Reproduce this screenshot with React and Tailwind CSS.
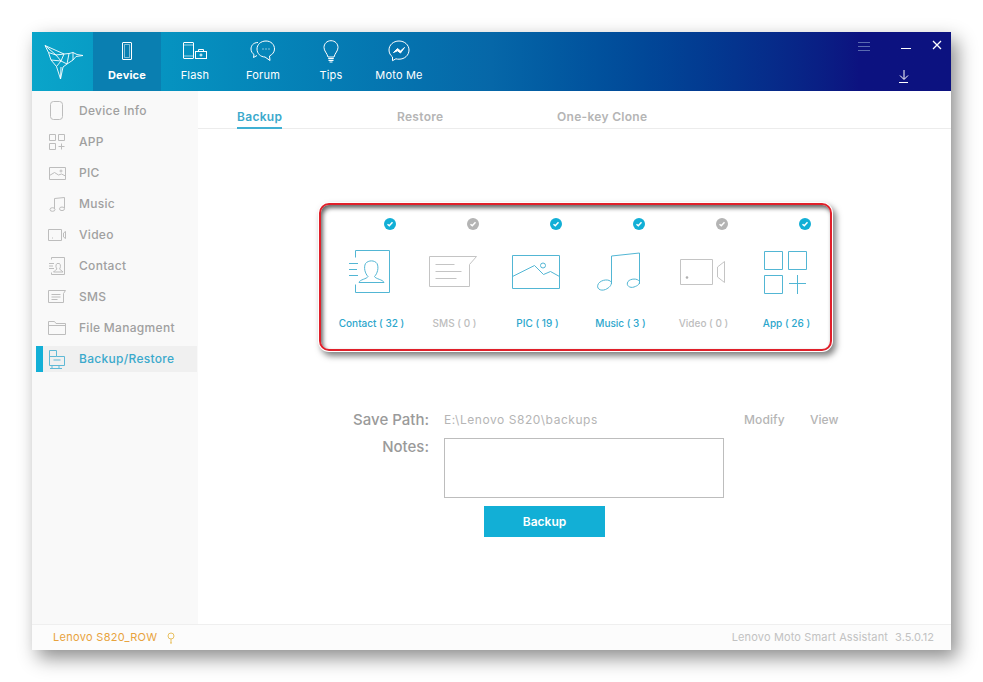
import React from 'react';

const font = { fontFamily: 'Inter, "Noto Sans", sans-serif' };

function Svg({ w, h, children, className = '', stroke = 'currentColor', sw = 1 }) {
  return (
    <svg width={w} height={h} viewBox={`0 0 ${w} ${h}`} fill="none" stroke={stroke} strokeWidth={sw} className={`block shrink-0 ${className}`}>
      {children}
    </svg>
  );
}

const Logo = () => (
  <svg width="44" height="40" viewBox="40 40 44 40" fill="none" stroke="#fff" strokeWidth="0.9" strokeLinejoin="round" className="block">
    <path d="M44 43.500 L63 52 L68 51.500 L72 50.500 L76 52.500 L82 53.500 L75 54.500 L72 58 L66 62 L62 65 L59.500 77 L55.500 64.500 L50 58 L47.500 50.500 Z" />
    <path d="M44 43.500 L55 53 L47.500 50.500 M55 53 L63 52 L60 59 L50 58 M60 59 L55.500 64.500 M60 59 L66 62 L68 51.500 M59.500 77 L60 65 M55 53 L60 59 M72 50.500 L72 58" />
  </svg>
);

const Phone = () => (
  <Svg w={12} h={19}><rect x="1.500" y="0.500" width="9" height="17" rx="0.500" /><path d="M3.500 2.500h5v13h-5z" strokeOpacity="0.5" /></Svg>
);
const Flash = () => (
  <Svg w={25} h={18}>
    <rect x="0.500" y="0.500" width="10" height="16" rx="0.500" /><path d="M0.500 14h10M0.500 3h10" strokeOpacity="0.6" />
    <rect x="12.500" y="9.500" width="11" height="7" /><path d="M15.500 9.500v-2h5v2M18 11.500v3M16.500 13h3" />
  </Svg>
);
const Forum = () => (
  <Svg w={26} h={22}>
    <path d="M8 2.500 C3 2.500 1 6 1 9 c0 2.500 1.500 4.500 3 5.500 l-.5 3 3.500-2" />
    <path d="M16 1 C10.500 1 7 4.800 7 9 c0 4.500 3.500 8 8 8 l5 3.500 -.5-4.500 c3-1.500 5-4 5-7 C24.500 4.500 21 1 16 1 Z" />
    <path d="M12.500 9h1M15.500 9h1M18.500 9h1" />
  </Svg>
);
const Bulb = () => (
  <Svg w={16} h={23}>
    <path d="M8 .7 C3.800 .7 1 3.800 1 7.500 c0 3.500 3 5.500 4 9.500 h6 c1-4 4-6 4-9.500 C15 3.800 12.200 .7 8 .7 Z" />
    <path d="M5.200 18.500h5.600M5.500 20.300h5M6.500 22h3" strokeWidth="1.200" />
  </Svg>
);
const Moto = () => (
  <Svg w={22} h={22}>
    <path d="M11 1 C5.300 1 1 5 1 10 c0 3 1.400 5.300 3.500 7 v3.700 l3.400-1.900 c1 .3 2 .4 3.100 .4 5.700 0 10-4 10-9.200 C21 5 16.700 1 11 1 Z" />
    <path d="M5.500 12.500 L9.500 8.500 L12.500 11 L16.500 7.500 L12.500 13 L9.500 10.800 Z" fill="currentColor" />
  </Svg>
);

const navItems = [
  { label: 'Device', icon: <Phone />, active: true },
  { label: 'Flash', icon: <Flash /> },
  { label: 'Forum', icon: <Forum /> },
  { label: 'Tips', icon: <Bulb /> },
  { label: 'Moto Me', icon: <Moto /> },
];

const SideBox = ({ children, w = 20, h = 20 }) => (
  <Svg w={w} h={h} stroke="#bdbdbd">{children}</Svg>
);

const sideItems = [
  { label: 'Device Info', icon: <SideBox h={20}><rect x="3.500" y="0.500" width="12" height="18" rx="3" /></SideBox> },
  { label: 'APP', icon: <SideBox><path d="M2.500 2.500h6v6h-6zM11.500 2.500h6v6h-6zM2.500 11.500h6v6h-6zM11.500 14.500h6M14.500 11.500v6" /></SideBox> },
  { label: 'PIC', icon: <SideBox><path d="M2.500 4.500h16v12h-16zM2.500 12.500l5-3 4 2.500 3-1 4 2" /><circle cx="14" cy="8" r="1" /></SideBox> },
  { label: 'Music', icon: <SideBox><path d="M7.500 15V4.500l10-1V14" /><ellipse cx="5.500" cy="15.500" rx="2.500" ry="1.800" /><ellipse cx="15" cy="14.800" rx="2.500" ry="1.800" /></SideBox> },
  { label: 'Video', icon: <SideBox><path d="M1.500 4.500h13v11h-13zM16.500 8l2-1.500v7l-2-1.500z" /><path d="M5 13h1" /></SideBox> },
  { label: 'Contact', icon: <SideBox><path d="M4.500 3.500v-2h13v17h-13v-2M2 7.500h5M2 10h4M2 12.500h5M6.500 16c1-1.500 3-2 3.500-3-1-1-1.800-4 0-5.500h2.500c1.500 1.500 1 4.500 0 5.500 .5 1 2.500 1.500 3.500 3z" /></SideBox> },
  { label: 'SMS', icon: <SideBox><path d="M1.500 3.500h17l-2 3v9h-15zM4.500 7.500h9M4.500 10h9M4.500 12.500h6" /></SideBox> },
  { label: 'File Managment', icon: <SideBox><path d="M1.500 16.500v-13h6l1.500 2h9.500v11zM1.500 7.500h17" /></SideBox> },
  { label: 'Backup/Restore', active: true, icon: <Svg w={20} h={20} stroke="#5fb9d6"><path d="M2.500 1.500h7v6h8v9h-15zM2.500 7.500h7M6.500 11h7M5 16.500v2.500M12 16.500v2.500M3 19.500h12" /></Svg> },
];

const Contact = () => (
  <Svg w={42} h={46} stroke="#52b6d4">
    <path d="M6.500 8.500v-7h34v42h-34v-8M0 14.500h9M0 20.500h8M0 26.500h9" />
    <path d="M10 33.500c.5-3 8-3.500 9-6-3-3-4.500-9-2.500-13 3-3.500 9-3.500 11.500 0 2 4 .5 10-2.500 13 1 2.500 8.500 3 9.500 6z" />
  </Svg>
);
const Sms = () => (
  <Svg w={50} h={34} stroke="#c4c4c4">
    <path d="M1.500 1.500h47l-7 8v22h-40zM7.500 9.500h19M7.500 16.500h26M7.500 23.500h21" />
  </Svg>
);
const Pic = () => (
  <Svg w={50} h={36} stroke="#52b6d4">
    <path d="M1.500 1.500h47v33h-47zM1.500 22.500l22-11 9 9 7-3 9 5" />
    <circle cx="32" cy="11.500" r="2.500" />
  </Svg>
);
const Music = () => (
  <Svg w={46} h={40} stroke="#52b6d4">
    <path d="M15.500 32V4l28-3v31" />
    <path d="M15.500 30.500c-2-4-10-3-13 1-3 5 2 8 7 6 4-2 6-4 6-7.500zM43.500 29.500c-2-3.500-9-3-11.500 0-2.500 4 2 7 6 5.500 4-1.500 5.500-2.500 5.500-5.500z" />
  </Svg>
);
const Video = () => (
  <Svg w={46} h={28} stroke="#c4c4c4">
    <path d="M1.500 1.500h32v25h-32zM38.500 9l7-5.500v21l-7-5.500z" />
    <circle cx="8" cy="19.500" r="1.300" fill="#b0b0b0" stroke="none" />
  </Svg>
);
const AppGrid = () => (
  <Svg w={44} h={44} stroke="#52b6d4">
    <path d="M1.500 1.500h18v18h-18zM25.500 1.500h18v18h-18zM1.500 25.500h18v18h-18zM26 33.500h17M34.500 25v19" />
  </Svg>
);

const backupItems = [
  { label: 'Contact ( 32 )', icon: <Contact />, on: true },
  { label: 'SMS ( 0 )', icon: <Sms /> },
  { label: 'PIC ( 19 )', icon: <Pic />, on: true },
  { label: 'Music ( 3 )', icon: <Music />, on: true },
  { label: 'Video ( 0 )', icon: <Video /> },
  { label: 'App ( 26 )', icon: <AppGrid />, on: true },
];

function Check({ on }) {
  return (
    <div className={`w-3 h-3 rounded-full flex items-center justify-center ${on ? 'bg-[#12afd6]' : 'bg-[#b4b4b4]'}`}>
      <svg width="8" height="8" viewBox="0 0 8 8" fill="none" stroke="#fff" strokeWidth="1.500"><path d="M1.500 4.200l1.800 1.600 3.200-3.500" /></svg>
    </div>
  );
}

export default function App() {
  return (
    <div style={font} className="w-[983px] h-[682px] bg-white pt-8 pl-8 overflow-hidden">
      <div className="w-[919px] h-[618px] bg-white flex flex-col shadow-[6px_8px_18px_rgba(0,0,0,0.45)]">
        <header className="h-[59px] shrink-0 flex text-white bg-gradient-to-r from-[#0aa5ca] via-[#0667a8] via-50% to-[#0c1280] to-90%">
          <div className="w-[61px] flex items-center justify-center pl-[1px]"><Logo /></div>
          {navItems.map(n => (
            <div key={n.label} className={`w-[68px] flex flex-col items-center ${n.active ? 'bg-[#0a7fb1]' : ''}`}>
              <div className="h-[30px] mt-[4px] flex items-center justify-center">{n.icon}</div>
              <span className={`text-[11px] leading-[14px] mt-[2px] tracking-[0.2px] ${n.active ? 'font-bold' : 'font-normal'}`}>{n.label}</span>
            </div>
          ))}
          <div className="flex-1" />
          <div className="w-[12px] mt-[10px] mr-[28px] flex flex-col gap-[3px]">
            <div className="h-[1px] bg-[#5a6bb0]" /><div className="h-[1px] bg-[#5a6bb0]" /><div className="h-[1px] bg-[#5a6bb0]" />
          </div>
          <div className="w-[13px] mr-[21px] flex flex-col">
            <div className="h-[1px] w-[10px] bg-white mt-[16px] ml-[3px]" />
            <svg width="12" height="13" viewBox="0 0 12 13" fill="none" stroke="#fff" className="mt-[21px]"><path d="M6 0v9M2 5.500L6 9.500l4-4M1 12.500h9" /></svg>
          </div>
          <svg width="10" height="10" viewBox="0 0 10 10" fill="none" stroke="#fff" strokeWidth="1.300" className="mt-[8px] mr-[9px]"><path d="M1 1l8 8M9 1l-8 8" /></svg>
        </header>

        <div className="flex flex-1 min-h-0">
          <aside className="w-[166px] shrink-0 bg-[#f9f9f9] pt-[4px]">
            {sideItems.map(s => (
              <div key={s.label} className="h-[31px] flex items-center">
                <div className={`h-[26px] flex-1 flex items-center ml-1 mr-[1px] ${s.active ? 'bg-[#f0f0f0] border-l-[7px] border-[#12afd6]' : 'border-l-[7px] border-transparent'}`}>
                  <div className="ml-[4px] w-[32px]">{s.icon}</div>
                  <span className={`text-[12px] font-medium tracking-[0.3px] ${s.active ? 'text-[#3ba9cc]' : 'text-[#a0a0a0]'}`}>{s.label}</span>
                </div>
              </div>
            ))}
          </aside>

          <main className="flex-1 min-w-0">
            <div className="h-[38px] border-b border-[#ececec] flex text-[12px] font-semibold tracking-[0.3px] pl-[39px]">
              <div className="w-[160px]"><span className="inline-block h-[38px] leading-[52px] pt-0 border-b-2 border-[#3fb0d3] text-[#3ba9cc]">Backup</span></div>
              <div className="w-[160px] leading-[52px] text-[#b5b5b5]">Restore</div>
              <div className="leading-[52px] text-[#b5b5b5]">One-key Clone</div>
            </div>

            <div className="w-[513px] h-[148px] ml-[121px] mt-[74px] rounded-[10px] border-[2px] border-[#e0202a] bg-white flex pl-[9px] shadow-[inset_2px_3px_4px_rgba(0,0,0,0.6),0_0_0_1px_#ffffff,3px_4px_6px_1px_rgba(0,0,0,0.5)]">
              {backupItems.map(b => (
                <div key={b.label} className="w-[83px] flex flex-col items-center">
                  <div className="mt-[13px] pl-[36px]"><Check on={b.on} /></div>
                  <div className="h-[60px] mt-[12px] pr-[3px] flex items-center justify-center">{b.icon}</div>
                  <span className={`mt-[14px] text-[10px] leading-[14px] font-medium whitespace-nowrap ${b.on ? 'text-[#2ba6cc]' : 'text-[#bdbdbd]'}`}>{b.label}</span>
                </div>
              ))}
            </div>

            <div className="mt-[59px] flex items-center h-[20px]">
              <div className="w-[231px] text-right text-[15px] font-medium text-[#9a9a9a]">Save Path:</div>
              <div className="ml-[15px] w-[300px] text-[12px] text-[#b5b5b5] tracking-[0.55px]">E:\Lenovo S820\backups</div>
              <div className="text-[12px] font-medium text-[#b5b5b5] w-[66px] tracking-[0.1px]">Modify</div>
              <div className="text-[12px] font-medium text-[#b5b5b5]">View</div>
            </div>
            <div className="mt-[8px] flex">
              <div className="w-[231px] text-right text-[15px] font-medium text-[#9a9a9a] leading-[18px]">Notes:</div>
              <div className="ml-[15px] w-[280px] h-[60px] border border-[#bdbdbd] bg-white" />
            </div>
            <div className="mt-[8px] ml-[286px] w-[121px] h-[31px] bg-[#12afd6] text-white text-[12px] font-semibold flex items-center justify-center">Backup</div>
          </main>
        </div>

        <footer className="h-[26px] shrink-0 border-t border-[#efefef] bg-[#fcfcfc] flex items-center pl-[21px] pr-[17px] text-[11px]">
          <span className="text-[#e8a33d] tracking-[0.3px]">Lenovo S820_ROW</span>
          <svg width="8" height="12" viewBox="0 0 8 12" fill="none" stroke="#e8c060" className="ml-[10px]"><circle cx="4" cy="4" r="3" /><path d="M4 7v4M3 11h2" /></svg>
          <span className="ml-auto text-[#c2c2c2] tracking-[0.15px]">Lenovo Moto Smart Assistant</span>
          <span className="ml-[7px] text-[#c2c2c2]">3.5.0.12</span>
        </footer>
      </div>
    </div>
  );
}
